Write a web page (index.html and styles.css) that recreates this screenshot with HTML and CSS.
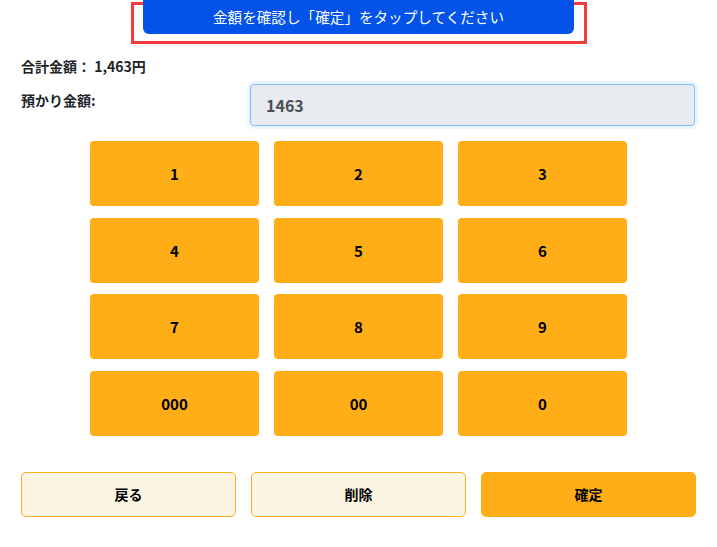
FILE: index.html
```html
<!DOCTYPE html>
<html lang="ja">
<head>
<meta charset="utf-8">
<title>お預かり金額</title>
<link rel="stylesheet" href="styles.css">
</head>
<body>
<div class="page">
  <div class="header">
    <div class="banner">金額を確認し「確定」をタップしてください</div>
  </div>
  <div class="total">合計金額： 1,463円</div>
  <div class="deposit">
    <div class="deposit-label">預かり金額:</div>
    <div class="deposit-input">1463</div>
  </div>
  <div class="keypad">
    <button class="key">1</button>
    <button class="key">2</button>
    <button class="key">3</button>
    <button class="key">4</button>
    <button class="key">5</button>
    <button class="key">6</button>
    <button class="key">7</button>
    <button class="key">8</button>
    <button class="key">9</button>
    <button class="key">000</button>
    <button class="key">00</button>
    <button class="key">0</button>
  </div>
  <div class="actions">
    <button class="action action-light">戻る</button>
    <button class="action action-light">削除</button>
    <button class="action action-primary">確定</button>
  </div>
</div>
</body>
</html>
```

FILE: styles.css
```css
* { box-sizing: border-box; }
html, body { margin: 0; padding: 0; background: #fff; }
body {
  font-family: "Noto Sans CJK JP", "Noto Sans", sans-serif;
  color: #212529;
}
.page {
  width: 717px;
  padding: 0 21px;
}
.header {
  position: relative;
  width: 431px;
  margin: 0 auto;
  height: 38px;
}
.header::before {
  content: "";
  position: absolute;
  top: 2px;
  left: -12px;
  right: -13px;
  height: 36px;
  border: 3px solid #f43b3b;
}
.banner {
  position: relative;
  z-index: 1;
  height: 34px;
  background: #0453e8;
  color: #fff;
  border-radius: 0 0 6px 6px;
  font-size: 14.6px;
  display: flex;
  align-items: center;
  justify-content: center;
  padding-bottom: 2px;
}
.total {
  margin-top: 19px;
  font-size: 14px;
  font-weight: 700;
  line-height: 18px;
  color: #212529;
}
.deposit {
  display: grid;
  grid-template-columns: 229px 445px;
  margin-top: 9px;
}
.deposit-label {
  font-size: 14px;
  font-weight: 700;
  line-height: 18px;
  padding-top: 7px;
}
.deposit-input {
  height: 42px;
  background: #e8ebef;
  border: 1px solid #80bdff;
  border-radius: 4px;
  box-shadow: 0 0 0 3px rgba(0, 123, 255, 0.08);
  font-size: 16px;
  font-weight: 700;
  color: #495057;
  display: flex;
  align-items: center;
  padding-left: 15px;
}
.keypad {
  width: 537px;
  margin: 15px auto 0;
  display: grid;
  grid-template-columns: repeat(3, 169px);
  grid-auto-rows: 65px;
  column-gap: 15px;
  row-gap: 11.67px;
}
.key {
  border: none;
  border-radius: 4px;
  background: #ffae17;
  font-family: "Noto Sans CJK JP", "Noto Sans", sans-serif;
  font-size: 15px;
  font-weight: 700;
  color: #000;
  padding: 0;
}
.action {
  height: 45px;
  border-radius: 5px;
  font-family: "Noto Sans CJK JP", sans-serif;
  font-size: 14px;
  font-weight: 700;
  color: #000;
  padding: 0;
}
.actions {
  margin-top: 36px;
  display: grid;
  grid-template-columns: repeat(3, 1fr);
  column-gap: 15px;
}
.action-light {
  background: #fdf5e4;
  border: 1px solid #ffae17;
}
.action-primary {
  background: #ffae17;
  border: 1px solid #ffae17;
}
```
